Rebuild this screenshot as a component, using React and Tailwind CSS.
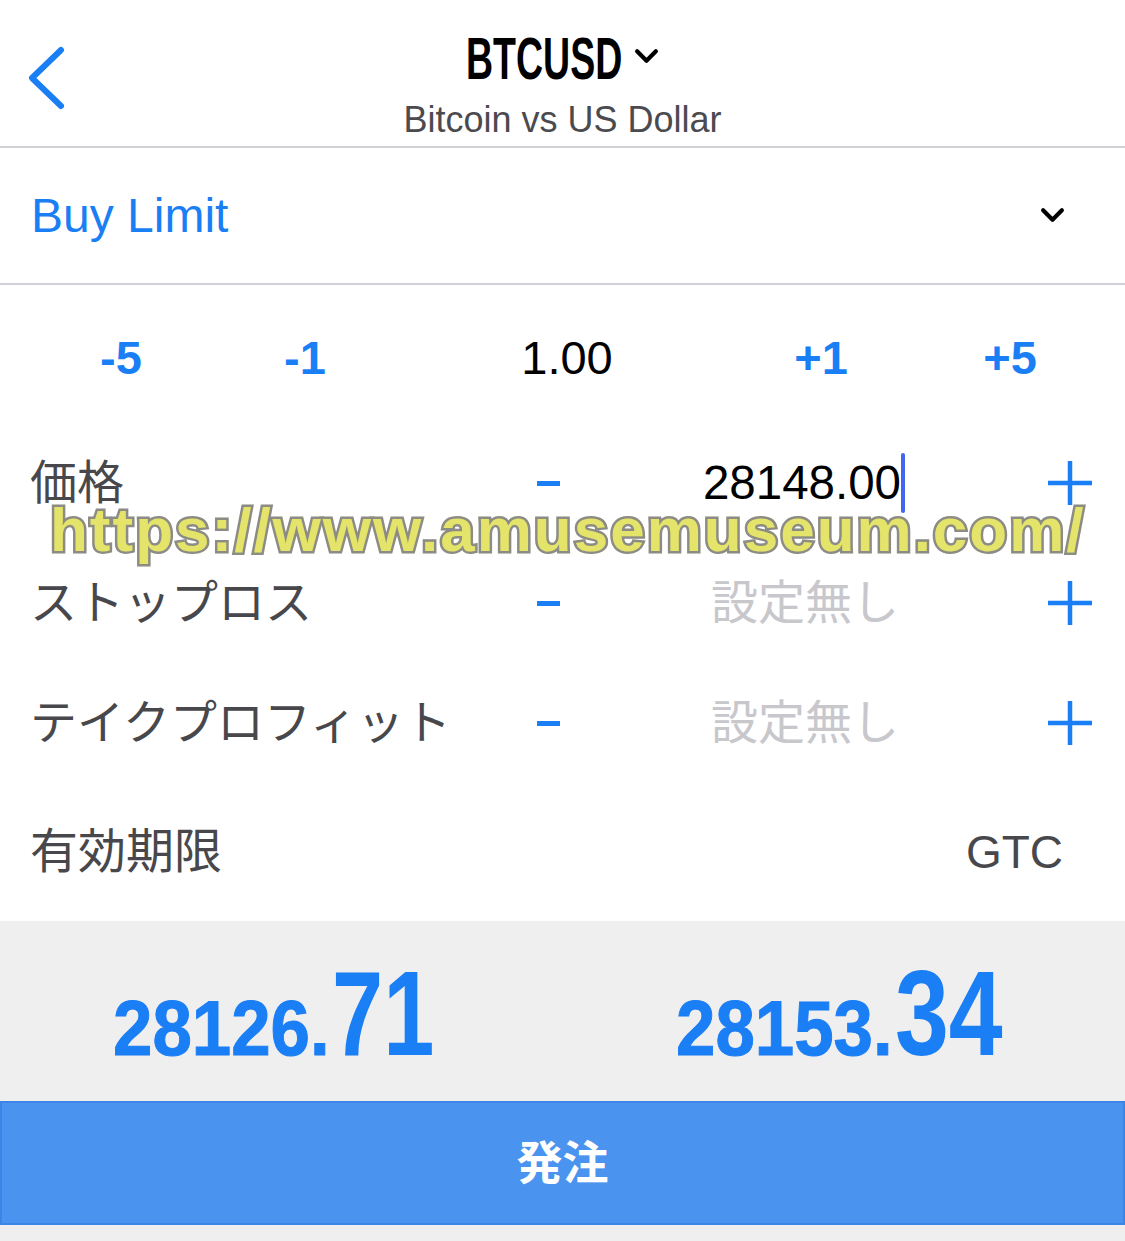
const sans = "font-['Liberation_Sans','Noto_Sans_CJK_JP',sans-serif]";

function Chevron({ className }) {
  return (
    <svg viewBox="0 0 24 16" className={className} fill="none" stroke="currentColor" strokeWidth="4" strokeLinecap="round" strokeLinejoin="round">
      <path d="M3 3l9 9 9-9" />
    </svg>
  );
}

function Plus() {
  return (
    <svg viewBox="0 0 44 44" className="w-[44px] h-[44px] text-[#1a7ef5]" fill="none" stroke="currentColor" strokeWidth="4.5">
      <path d="M22 0v44M0 22h44" />
    </svg>
  );
}

function Minus() {
  return <div className="w-[23px] h-[5px] bg-[#1a7ef5]" />;
}

function Quote({ whole, frac, fracClass }) {
  return (
    <div className="flex items-baseline pl-[113px] font-bold">
      <div className="w-[219px]">
        <span className="inline-block origin-left scale-x-[0.92] text-[77px] leading-none [-webkit-text-stroke:1px_#1a7ef5]">{whole}</span>
      </div>
      <div className="w-[110px]">
        <span className={`inline-block origin-left text-[121px] leading-none ${fracClass}`}>{frac}</span>
      </div>
    </div>
  );
}

const rows = [
  { label: "価格", value: "28148.00", active: true },
  { label: "ストップロス", value: "設定無し" },
  { label: "テイクプロフィット", value: "設定無し" },
];

export default function App() {
  return (
    <div className={`relative w-[1125px] h-[1241px] bg-white flex flex-col overflow-hidden ${sans}`}>
      {/* Header */}
      <header className="h-[148px] shrink-0 border-b-2 border-[#d1d1d6] grid grid-cols-[1fr_auto_1fr]">
        <div className="pl-[26px] pt-[46px]">
          <svg viewBox="0 0 40 64" className="w-[40px] h-[64px] text-[#1a7ef5]" fill="none" stroke="currentColor" strokeWidth="6" strokeLinecap="round" strokeLinejoin="round">
            <path d="M35 4L6 32l29 28" />
          </svg>
        </div>
        <div className="flex flex-col items-center pt-[26px]">
          <div className="flex items-center">
            <div className="w-[158px] h-[66px]">
              <span className="inline-block origin-left scale-x-[0.625] text-[60px] leading-[66px] font-bold text-black">BTCUSD</span>
            </div>
            <Chevron className="w-[25px] h-[17px] ml-[10px] mt-[-6px] text-black" />
          </div>
          <div className="text-[36px] leading-[40px] text-[#4a4a4f] mt-[8px]">Bitcoin vs US Dollar</div>
        </div>
        <div />
      </header>

      {/* Order type */}
      <div className="h-[137px] shrink-0 border-b-2 border-[#d1d1d6] flex items-center justify-between pl-[31px] pr-[60px]">
        <span className="text-[48px] text-[#1a7ef5]">Buy Limit</span>
        <Chevron className="w-[25px] h-[17px] text-black" />
      </div>

      {/* Volume stepper */}
      <div className="h-[138px] shrink-0 pt-[8px] flex items-center text-center text-[47px]">
        <span className="w-[100px] ml-[71px] font-bold text-[#1a7ef5]">-5</span>
        <span className="w-[100px] ml-[84px] font-bold text-[#1a7ef5]">-1</span>
        <span className="w-[100px] ml-[162px] text-black">1.00</span>
        <span className="w-[100px] ml-[154px] font-bold text-[#1a7ef5]">+1</span>
        <span className="w-[100px] ml-[89px] font-bold text-[#1a7ef5]">+5</span>
      </div>

      {/* Price / SL / TP */}
      {rows.map((r) => (
        <div key={r.label} className="h-[120px] shrink-0 flex items-center pl-[30px] pr-[33px]">
          <span className="w-[507px] text-[47px] text-[#48484c]">{r.label}</span>
          <Minus />
          <div className="w-[345px] flex justify-end items-center">
            {r.active ? (
              <>
                <span className="text-[47.5px] text-black">{r.value}</span>
                <span className="w-[4px] h-[60px] bg-[#4466ee] rounded-full" />
              </>
            ) : (
              <span className="text-[47px] text-[#c7c7cc] mr-[6px]">{r.value}</span>
            )}
          </div>
          <div className="flex-1 flex justify-end">
            <Plus />
          </div>
        </div>
      ))}

      {/* Expiration */}
      <div className="h-[138px] shrink-0 flex items-center justify-between pl-[30px] pr-[62px] text-[#48484c]">
        <span className="text-[48px]">有効期限</span>
        <span className="text-[46px]">GTC</span>
      </div>

      {/* Bid / Ask */}
      <div className="h-[180px] shrink-0 bg-[#efefef] grid grid-cols-2 items-center pt-[4px] text-[#1a7ef5]">
        <Quote whole="28126." frac="71" fracClass="scale-x-[0.76]" />
        <Quote whole="28153." frac="34" fracClass="scale-x-[0.8]" />
      </div>

      {/* Submit */}
      <button className="h-[124px] shrink-0 bg-[#4a93ef] border-2 border-[#3c84e6] text-white text-[46px] font-bold">
        発注
      </button>
      <div className="flex-1 bg-[#efefef]" />

      {/* Watermark */}
      <div className="absolute left-[50px] top-[490px] text-[62px] leading-[80px] tracking-[2px] font-bold text-[#e4e46a] [-webkit-text-stroke:5px_#8c8c84] [paint-order:stroke_fill] pointer-events-none whitespace-nowrap">
        https://www.amusemuseum.com/
      </div>
    </div>
  );
}
